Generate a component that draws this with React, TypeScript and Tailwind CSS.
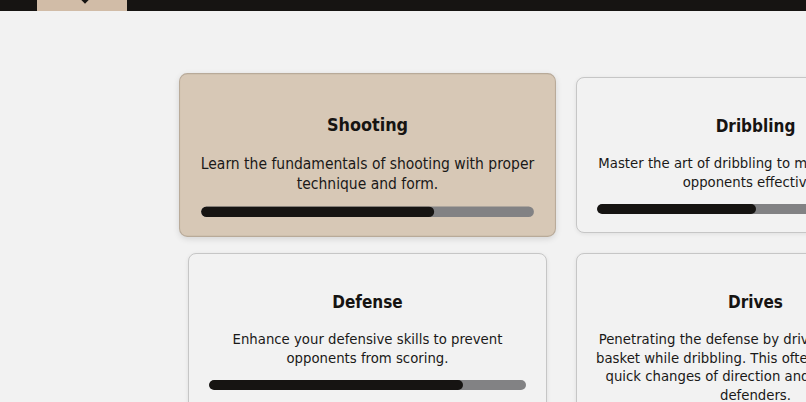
import React from "react";

const skills = [
  {
    title: "Shooting",
    desc: "Learn the fundamentals of shooting with proper technique and form.",
    pct: 70,
    active: true,
  },
  {
    title: "Dribbling",
    desc: "Master the art of dribbling to maneuver around opponents effectively.",
    pct: 50,
  },
  {
    title: "Defense",
    desc: "Enhance your defensive skills to prevent opponents from scoring.",
    pct: 80,
  },
  {
    title: "Drives",
    desc: "Penetrating the defense by driving towards the basket while dribbling. This often involves using quick changes of direction and speed to beat defenders.",
    pct: 60,
  },
];

function Card({ s }: { s: (typeof skills)[number] }) {
  return (
    <div
      className={
        s.active
          ? "scale-105 rounded-lg border border-[#b8aa99] bg-[#d7c8b6] px-[19px] pt-[38px] pb-[18px] text-center shadow-[0_2px_6px_rgba(0,0,0,0.12)]"
          : "rounded-lg border border-[#c6c6c6] bg-[#f2f2f2] px-[19px] pt-[38px] pb-[18px] text-center shadow-[0_1px_4px_rgba(0,0,0,0.08)]"
      }
    >
      <h3 className="text-[17px] leading-[21px] font-bold text-[#161412]">{s.title}</h3>
      <p className="mt-[17px] text-[14.75px] leading-[18.5px] text-[#1a1918]">{s.desc}</p>
      <div className="mx-px mt-[13px] h-2.5 overflow-hidden rounded-full bg-[#828284]">
        <div className="h-full rounded-full bg-[#161412]" style={{ width: `${s.pct}%` }} />
      </div>
    </div>
  );
}

export default function App() {
  return (
    <div className="h-[402px] w-[806px] overflow-hidden bg-[#f2f2f2] font-['DejaVu_Sans_Condensed','DejaVu_Sans',Verdana,sans-serif] font-stretch-condensed">
      <header className="flex h-[11px] bg-[#161412]">
        <div className="relative ml-[37px] h-full w-[90px] overflow-hidden bg-[#d1bca7]">
          <div className="absolute left-[44px] top-[-6px] h-[8px] w-[8px] rotate-45 bg-[#161412]" />
        </div>
      </header>
      <main className="pt-[66px] pl-[188px]">
        <div className="grid w-[747px] grid-cols-[359px_359px] gap-x-[29px] gap-y-[20px]">
          {skills.map((s) => (
            <Card key={s.title} s={s} />
          ))}
        </div>
      </main>
    </div>
  );
}
